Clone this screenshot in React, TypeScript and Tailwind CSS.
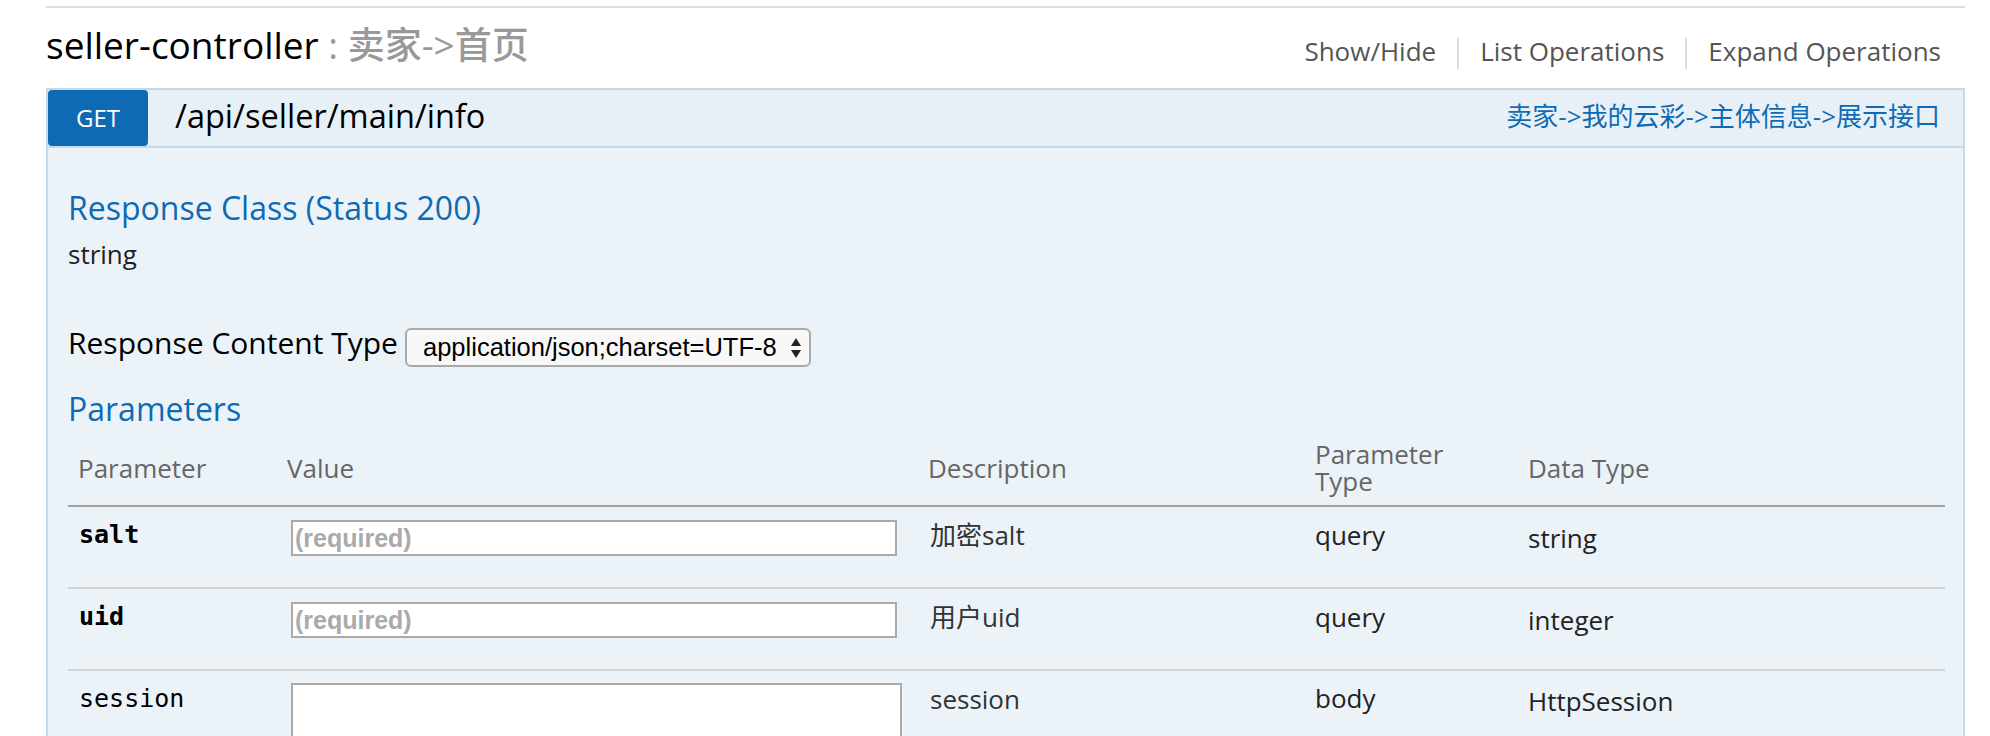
const rows = [
  { name: "salt", required: true, desc: "加密salt", type: "query", dataType: "string" },
  { name: "uid", required: true, desc: "用户uid", type: "query", dataType: "integer" },
];

function SelectArrows() {
  return (
    <svg width="10" height="20" viewBox="0 0 10 20" className="shrink-0">
      <polygon points="5,0 10,8 0,8" fill="#222" />
      <polygon points="0,12 10,12 5,20" fill="#222" />
    </svg>
  );
}

export default function App() {
  return (
    <div className="h-[736px] w-full overflow-hidden bg-white font-['Open_Sans','Noto_Sans_CJK_SC',sans-serif]">
      <div className="ml-[46px] w-[1919px] pt-[6px]">
        <div className="h-[2px] bg-[#dddddd]" />

        {/* Resource heading */}
        <div className="flex h-[80px] items-start justify-between">
          <h2 className="mt-[15px] text-[37px] leading-[44px] text-black">
            seller-controller <span className="font-medium text-[#999999]">: 卖家-&gt;首页</span>
          </h2>
          <div className="mt-[27px] flex items-start pr-[24px] text-[26px] leading-[32px] text-[#555555]">
            <span>Show/Hide</span>
            <span className="mx-[21px] mt-[3px] h-[31px] w-[2px] bg-[#dddddd]" />
            <span>List Operations</span>
            <span className="mx-[21px] mt-[3px] h-[31px] w-[2px] bg-[#dddddd]" />
            <span>Expand Operations</span>
          </div>
        </div>

        {/* Operation bar */}
        <div className="flex h-[60px] items-center border-2 border-[#c3d9ec] bg-[#e7f0f7]">
          <span className="flex h-[56px] w-[100px] shrink-0 items-center justify-center rounded-[4px] bg-[#0f6ab4] text-[24px] text-white">
            GET
          </span>
          <span className="ml-[27px] pb-[4px] text-[32.5px] leading-[40px] text-black">/api/seller/main/info</span>
          <span className="ml-auto pb-[4px] pr-[23px] text-[26px] leading-[32px] text-[#0f6ab4]">
            卖家-&gt;我的云彩-&gt;主体信息-&gt;展示接口
          </span>
        </div>

        {/* Operation content */}
        <div className="h-[600px] border-x-2 border-[#c3d9ec] bg-[#ebf3f9] pl-[20px] pr-[18px] pt-[40px]">
          <h4 className="text-[32px] leading-[40px] text-[#0f6ab4]">Response Class (Status 200)</h4>
          <div className="mt-[10px] text-[26px] leading-[32px] text-[#222222]">string</div>

          <div className="mt-[58px] flex items-start">
            <label className="w-[337px] shrink-0 text-[30px] leading-[30px] text-black">Response Content Type</label>
            <div className="flex h-[39px] w-[406px] items-center justify-between rounded-[6px] border-2 border-[#aaaaaa] bg-[#f8f8f8] pl-[16px] pr-[8px] font-['Liberation_Sans',sans-serif] text-[25.5px] text-black">
              <span>application/json;charset=UTF-8</span>
              <SelectArrows />
            </div>
          </div>

          <h4 className="mt-[22px] text-[32px] leading-[40px] text-[#0f6ab4]">Parameters</h4>

          <div className="mt-[2px]">
            <div className="grid grid-cols-[209px_641px_387px_213px_1fr] items-center border-b-2 border-[#a0a0a0] py-[10px] text-[26px] leading-[27px] text-[#666666]">
              <div className="pl-[10px]">Parameter</div>
              <div className="pl-[10px]">Value</div>
              <div className="pl-[10px]">Description</div>
              <div className="pl-[10px]">
                Parameter
                <br />
                Type
              </div>
              <div className="pl-[10px]">Data Type</div>
            </div>

            {rows.map((row) => (
              <div
                key={row.name}
                className="grid h-[82px] grid-cols-[209px_641px_387px_213px_1fr] items-start border-b-2 border-[#d2d2d2] pt-[13px] text-[26px] leading-[30px] text-[#222222]"
              >
                <div className="pl-[11px] font-['DejaVu_Sans_Mono',monospace] text-[25px] font-bold text-black">{row.name}</div>
                <div className="pl-[14px]">
                  <input
                    readOnly
                    placeholder="(required)"
                    className="block h-[36px] w-[606px] border-2 border-[#aaaaaa] bg-white px-[2px] font-['Liberation_Sans',sans-serif] text-[25px] font-bold outline-none placeholder:text-[#aaaaaa]"
                  />
                </div>
                <div className="pl-[12px] text-[#333333]">{row.desc}</div>
                <div className="pl-[10px]">{row.type}</div>
                <div className="pl-[10px] pt-[3px]">{row.dataType}</div>
              </div>
            ))}

            <div className="grid grid-cols-[209px_641px_387px_213px_1fr] items-start pt-[12px] text-[26px] leading-[30px] text-[#222222]">
              <div className="pl-[11px] pt-[1px] font-['DejaVu_Sans_Mono',monospace] text-[25px] text-black">session</div>
              <div className="pl-[14px]">
                <textarea readOnly className="block h-[110px] w-[611px] resize-none border-2 border-[#aaaaaa] bg-white outline-none" />
              </div>
              <div className="pl-[12px] pt-[1px] text-[#333333]">session</div>
              <div className="pl-[10px]">body</div>
              <div className="pl-[10px] pt-[3px]">HttpSession</div>
            </div>
          </div>
        </div>
      </div>
    </div>
  );
}
